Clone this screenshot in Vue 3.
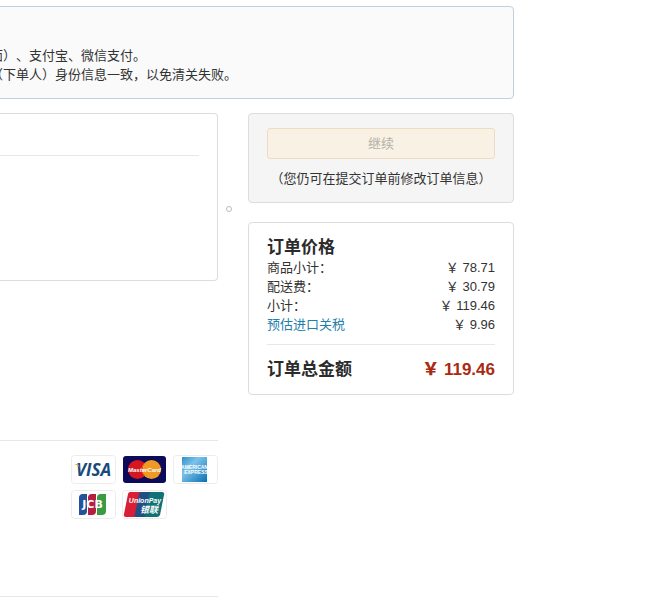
<script setup>
const prices = [
  { label: '商品小计：', amount: '￥ 78.71' },
  { label: '配送费：', amount: '￥ 30.79' },
  { label: '小计：', amount: '￥ 119.46' },
  { label: '预估进口关税', amount: '￥ 9.96', link: true },
]
</script>

<template>
  <div class="page">
    <section class="notice">
      <p>面）、支付宝、微信支付。</p>
      <p>（下单人）身份信息一致，以免清关失败。</p>
    </section>

    <div class="columns">
      <main class="main">
        <section class="panel">
          <hr class="rule" />
        </section>
        <section class="payments">
          <ul class="cards">
            <li>
              <svg viewBox="0 0 45 29" role="img" aria-label="VISA">
                <rect x=".5" y=".5" width="44" height="28" rx="3" fill="#fff" stroke="#ececec" />
                <text x="22.500" y="20.500" class="visa">VISA</text>
                <path d="M3 9h4l2.500 5C8 11 6 10 3 9z" fill="#dfa548" />
              </svg>
            </li>
            <li>
              <svg viewBox="0 0 45 29" role="img" aria-label="MasterCard">
                <rect x="1" y="1" width="43" height="27" rx="3" fill="#0b0b59" />
                <circle cx="15.500" cy="14.500" r="9.500" fill="#d8161f" />
                <circle cx="29.500" cy="14.500" r="9.500" fill="#f09a24" />
                <path d="M22.500 8.100a9.500 9.500 0 0 0 0 12.800" fill="none" stroke="#e75b20" />
                <text x="22.500" y="17" class="master">MasterCard</text>
              </svg>
            </li>
            <li>
              <svg viewBox="0 0 45 29" role="img" aria-label="American Express">
                <defs>
                  <linearGradient id="amex" x1="0" y1="0" x2="1" y2="1">
                    <stop offset="0" stop-color="#2f8fc8" />
                    <stop offset=".35" stop-color="#7cc3e8" />
                    <stop offset="1" stop-color="#0870b4" />
                  </linearGradient>
                </defs>
                <rect x=".5" y=".5" width="44" height="28" rx="3" fill="#fff" stroke="#ececec" />
                <rect x="9" y="2" width="25" height="25" fill="url(#amex)" />
                <text x="21.500" y="14" class="amex">AMERICAN</text>
                <text x="23" y="19" class="amex">EXPRESS</text>
              </svg>
            </li>
            <li>
              <svg viewBox="0 0 45 29" role="img" aria-label="JCB">
                <rect x=".5" y=".5" width="44" height="28" rx="3" fill="#fff" stroke="#ececec" />
                <path d="M11 4h5v17a4 4 0 0 1-4 4H8V8a4 4 0 0 1 3-4z" fill="#23549b" />
                <path d="M20 4h5v17a4 4 0 0 1-4 4h-4V8a4 4 0 0 1 3-4z" fill="#b51f40" />
                <path d="M29 4h6v17a4 4 0 0 1-4 4h-5V8a4 4 0 0 1 3-4z" fill="#3b9b45" />
                <text x="21.500" y="18" class="jcb">JCB</text>
              </svg>
            </li>
            <li>
              <svg viewBox="0 0 45 29" role="img" aria-label="UnionPay 银联">
                <rect x=".5" y=".5" width="44" height="28" rx="3" fill="#fff" stroke="#ececec" />
                <path d="M8 2h12l-6 25H4q-3 0-2-3L6 4q.5-2 2-2z" fill="#d81f36" />
                <path d="M18 2h13l-6 25H14q-2 0-1-3l4-20z" fill="#214f83" />
                <path d="M29 2h11q3 0 2 3l-4 20q-1 2-3 2H24q-2 0-1-3l4-20z" fill="#107277" />
                <text x="23" y="13" class="union">UnionPay</text>
                <text x="27" y="23" class="union-cn">银联</text>
              </svg>
            </li>
          </ul>
        </section>
      </main>

      <div class="gutter"><span class="dot"></span></div>

      <aside class="side">
        <section class="box action">
          <button type="button" disabled>继续</button>
          <p>（您仍可在提交订单前修改订单信息）</p>
        </section>

        <section class="box summary">
          <h2>订单价格</h2>
          <table>
            <tbody>
              <tr v-for="row in prices" :key="row.label">
                <th scope="row">
                  <a v-if="row.link" href="#">{{ row.label }}</a>
                  <template v-else>{{ row.label }}</template>
                </th>
                <td>{{ row.amount }}</td>
              </tr>
            </tbody>
          </table>
          <div class="total">
            <span>订单总金额</span>
            <strong>￥ 119.46</strong>
          </div>
        </section>
      </aside>
    </div>
  </div>
</template>

<style>
body {
  overflow-x: hidden;
  background: #fff;
}
</style>

<style scoped>
.page {
  padding: 6px 138px 16px 0;
  color: #333;
  font: 13px/19px "Liberation Sans", "Noto Sans CJK SC", sans-serif;
  text-spacing-trim: space-all;
}
p, h2, ul, hr {
  margin: 0;
  padding: 0;
}
.notice {
  margin-left: -11px;
  padding: 39px 0 14px;
  border: 1px solid #bfd0de;
  border-radius: 4px;
  background: #fafafa;
  white-space: nowrap;
}
.columns {
  display: flex;
  margin-top: 14px;
}
.main {
  flex: 1;
  min-width: 0;
}
.panel {
  min-height: 125px;
  padding: 41px 18px 0 0;
  border: 1px solid #ddd;
  border-left: 0;
  border-radius: 0 4px 4px 0;
}
.rule {
  border: 0;
  border-top: 1px solid #e7e7e7;
}
.payments {
  display: flex;
  justify-content: flex-end;
  min-height: 141px;
  margin-top: 159px;
  padding-top: 14px;
  border-top: 1px solid #e7e7e7;
  border-bottom: 1px solid #e7e7e7;
}
.cards {
  display: grid;
  grid-template-columns: repeat(3, 45px);
  align-content: start;
  gap: 6px;
  list-style: none;
}
.cards svg {
  display: block;
  width: 45px;
  height: 29px;
}
.cards text {
  fill: #fff;
  text-anchor: middle;
}
.cards .visa {
  fill: #174b7c;
  font: italic 700 17px "Open Sans", sans-serif;
}
.master {
  font: italic 700 6px "Liberation Sans", sans-serif;
}
.amex {
  font: 700 5px "Liberation Sans", sans-serif;
}
.jcb {
  font: 700 11px "DejaVu Sans", sans-serif;
}
.union {
  font: italic 700 7px "Liberation Sans", sans-serif;
}
.union-cn {
  font: italic 700 9px "Noto Sans CJK SC", sans-serif;
}
.gutter {
  box-sizing: border-box;
  width: 30px;
  padding: 93px 8px 0;
}
.dot {
  display: block;
  box-sizing: border-box;
  width: 6px;
  height: 6px;
  border: 1px solid #bbb;
  border-radius: 50%;
}
.side {
  display: flex;
  flex-direction: column;
  gap: 19px;
  width: 266px;
}
.box {
  padding: 14px 18px;
  border: 1px solid #ddd;
  border-radius: 4px;
}
.action {
  background: #f5f5f5;
  text-align: center;
}
.action button {
  display: block;
  width: 100%;
  height: 31px;
  margin-bottom: 10px;
  padding: 0;
  border: 1px solid #ecdcc4;
  border-radius: 3px;
  background: #f9f2e4;
  color: #b3b0a9;
  font: inherit;
}
.action p {
  white-space: nowrap;
}
.summary {
  padding-top: 15px;
}
h2, .total {
  color: #2b2b2b;
  font-size: 17px;
  font-weight: 700;
  line-height: 20px;
}
table {
  width: 100%;
  border-collapse: collapse;
}
th, td {
  padding: 0;
  font-weight: 400;
  line-height: 19px;
  text-align: left;
}
td {
  text-align: right;
}
a {
  color: #1f80ad;
  text-decoration: none;
}
.total {
  display: flex;
  justify-content: space-between;
  margin-top: 10px;
  padding-top: 15px;
  border-top: 1px solid #e7e7e7;
}
.total strong {
  color: #a92b12;
}
</style>
